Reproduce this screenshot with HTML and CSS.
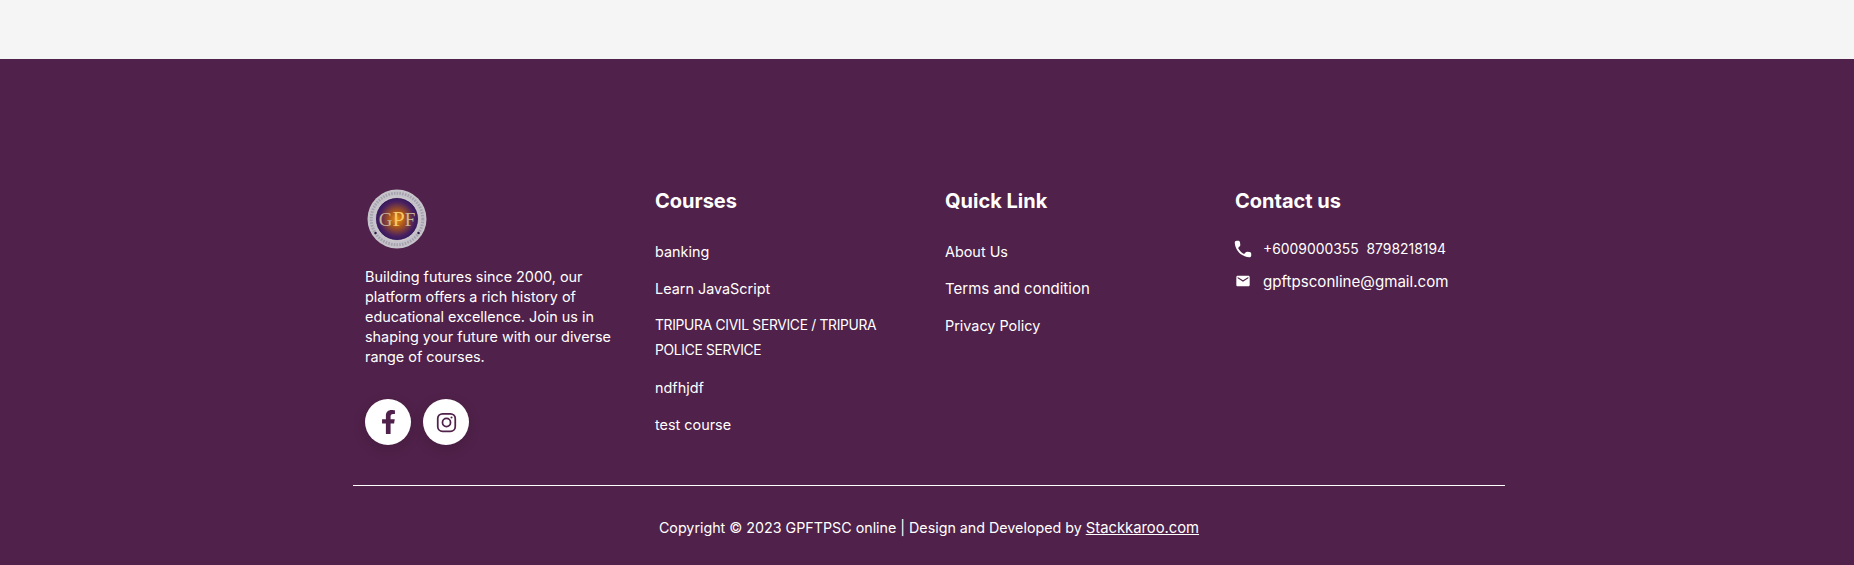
FILE: index.html
```html
<!DOCTYPE html>
<html lang="en">
<head>
    <meta charset="UTF-8">
    <title>GPFTPSC online</title>
    <link rel="stylesheet" href="styles.css">
</head>
<body>
<div class="top-band"></div>
<footer class="footer">
    <div class="footer-wrap">
        <div class="footer-cols">
            <div class="col">
                <svg class="logo" viewBox="0 0 60 60" role="img" aria-label="GPF logo">
                    <defs>
                        <radialGradient id="glow" cx="50%" cy="50%" r="50%">
                            <stop offset="0" stop-color="#f0920f"/>
                            <stop offset="0.4" stop-color="#a3521f"/>
                            <stop offset="0.8" stop-color="#4a2160"/>
                            <stop offset="1" stop-color="#32185c"/>
                        </radialGradient>
                    </defs>
                    <circle cx="30" cy="30" r="29.5" fill="#c6c4ca"/>
                    <circle cx="30" cy="30" r="25.8" fill="none" stroke="#a5a1ae" stroke-width="3" stroke-dasharray="1.6 1.2"/>
                    <circle cx="30" cy="30" r="21.5" fill="url(#glow)" stroke="#e8e2dc" stroke-width="0.7"/>
                    <circle cx="8.5" cy="44" r="1.2" fill="#2a1a45"/>
                    <circle cx="51.5" cy="44" r="1.2" fill="#2a1a45"/>
                    <text class="logo-text" x="30" y="36.5" text-anchor="middle">G<tspan class="logo-p">P</tspan>F</text>
                </svg>
                <p class="about">Building futures since 2000, our platform offers a rich history of educational excellence. Join us in shaping your future with our diverse range of courses.</p>
                <div class="socials">
                    <a class="social" href="#">
                        <svg viewBox="0 0 320 512" width="15" height="24"><path fill="#50214a" d="M279.14 288l14.22-92.66h-88.91v-60.13c0-25.35 12.42-50.06 52.24-50.06h40.42V6.26S260.43 0 225.36 0c-73.22 0-121.08 44.38-121.08 124.72v70.62H22.89V288h81.39v224h100.17V288z"/></svg>
                    </a>
                    <a class="social" href="#">
                        <svg viewBox="0 0 24 24" width="21" height="21" fill="none" stroke="#50214a" stroke-width="2"><rect x="2" y="2" width="20" height="20" rx="5.5"/><circle cx="12" cy="12" r="4.6"/><circle cx="17.7" cy="6.3" r="1.2" fill="#50214a" stroke="none"/></svg>
                    </a>
                </div>
            </div>
            <div class="col">
                <h4>Courses</h4>
                <ul class="links">
                    <li><a href="#">banking</a></li>
                    <li><a href="#">Learn JavaScript</a></li>
                    <li class="caps"><a href="#">TRIPURA CIVIL SERVICE / TRIPURA POLICE SERVICE</a></li>
                    <li><a href="#">ndfhjdf</a></li>
                    <li><a href="#">test course</a></li>
                </ul>
            </div>
            <div class="col">
                <h4>Quick Link</h4>
                <ul class="links">
                    <li><a href="#">About Us</a></li>
                    <li class="wide"><a href="#">Terms and condition</a></li>
                    <li><a href="#">Privacy Policy</a></li>
                </ul>
            </div>
            <div class="col">
                <h4>Contact us</h4>
                <div class="contact phone">
                    <svg viewBox="0 0 24 24" width="22" height="22"><path fill="#fff" d="M19.23 15.26l-2.54-.29c-.61-.07-1.21.14-1.64.57l-1.84 1.84c-2.83-1.44-5.15-3.75-6.59-6.59l1.85-1.85c.43-.43.64-1.03.57-1.64l-.29-2.52c-.12-1.01-.97-1.77-1.99-1.77H5.03c-1.13 0-2.07.94-2 2.07.53 8.54 7.36 15.36 15.89 15.89 1.13.07 2.07-.87 2.07-2v-1.73c.01-1.01-.75-1.86-1.76-1.98z"/></svg>
                    <span>+6009000355&nbsp; 8798218194</span>
                </div>
                <div class="contact mail">
                    <svg viewBox="0 0 24 24" width="16" height="16"><path fill="#fff" d="M20 4H4c-1.1 0-1.99.9-1.99 2L2 18c0 1.1.9 2 2 2h16c1.1 0 2-.9 2-2V6c0-1.1-.9-2-2-2zm0 4l-8 5-8-5V6l8 5 8-5v2z"/></svg>
                    <span>gpftpsconline@gmail.com</span>
                </div>
            </div>
        </div>
        <div class="copyright">Copyright © 2023 GPFTPSC online | Design and Developed by <a href="#">Stackkaroo.com</a></div>
    </div>
</footer>
</body>
</html>
```
FILE: styles.css
```css
*{
    margin:0;
    padding:0;
    box-sizing:border-box;
}
body{
    background:#f5f5f5;
    font-family:"Inter","Open Sans",sans-serif;
    color:#fff;
    overflow:hidden;
}
ul{
    list-style:none;
}
a{
    color:#fff;
    text-decoration:none;
}
.top-band{
    height:59px;
    background:#f5f5f5;
}
.footer{
    height:506px;
    background:#50214a;
    padding:128px 0 0 4px;
}
.footer-wrap{
    width:1152px;
    margin:0 auto;
}
.footer-cols{
    display:grid;
    grid-template-columns:repeat(4,290px);
    height:299px;
    padding-left:12px;
    border-bottom:1px solid #fff;
}
.col{
    font-size:14px;
    width:265px;
}
.logo{
    display:block;
    width:60px;
    height:60px;
    margin:2px 0 0 2px;
}
.logo-text{
    font-family:"Liberation Serif",serif;
    font-size:19px;
    fill:#c9b79c;
}
.logo-p{
    fill:#f7c869;
    font-size:22px;
}
.about{
    margin-top:18px;
    font-size:14.4px;
    line-height:20px;
}
.socials{
    display:flex;
    gap:12px;
    margin-top:32px;
}
.social{
    width:46px;
    height:46px;
    border-radius:50%;
    background:#fff;
    display:flex;
    align-items:center;
    justify-content:center;
    box-shadow:0 4px 14px rgba(0,0,0,.12);
}
h4{
    font-size:20px;
    font-weight:700;
    line-height:26px;
    margin:1px 0 25px;
}
.links li{
    font-size:14.4px;
    line-height:25px;
    margin-bottom:12px;
}
.links .caps{
    font-size:13.8px;
    letter-spacing:-.3px;
}
.links .wide{
    font-size:15px;
}
.contact{
    display:flex;
    align-items:center;
    height:22px;
    margin-bottom:10px;
}
.phone{
    font-size:13.9px;
    margin-top:-1px;
}
.phone svg{
    margin:0 9px 0 -3px;
}
.mail{
    font-size:15.1px;
}
.mail svg{
    margin-right:12px;
}
.copyright{
    text-align:center;
    font-size:14.28px;
    margin-top:33px;
}
.copyright a{
    font-size:14.8px;
    text-decoration:underline;
}
```
